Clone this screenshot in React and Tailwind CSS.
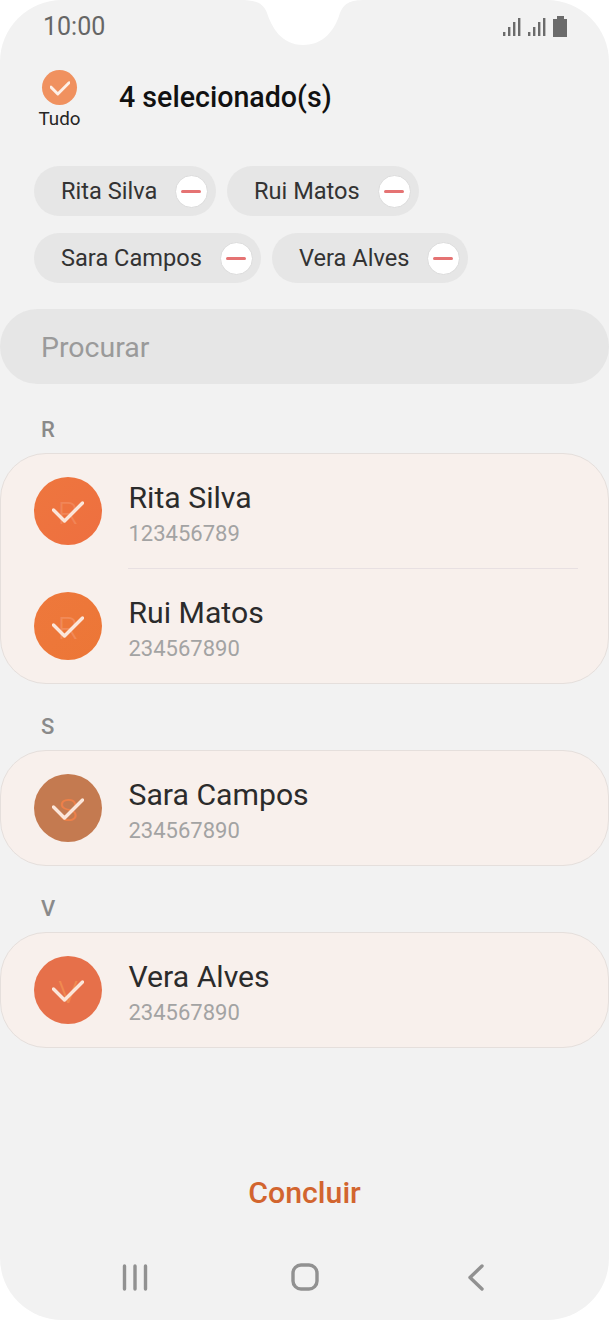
import React from "react";

const Check = ({ className, sw = 3.4 }) => (
  <svg viewBox="0 0 32 25" className={className} fill="none" stroke="currentColor" strokeWidth={sw} strokeLinecap="round" strokeLinejoin="round">
    <path d="M1.5 11 L12.5 22 L30.5 4" />
  </svg>
);

const Chip = ({ name, w }) => (
  <div className={`flex h-[50px] items-center justify-between rounded-full bg-[#e6e6e6] pr-[8.5px] pl-[27px] ${w}`}>
    <span className="pt-px text-[23.6px] leading-none text-[#333333]">{name}</span>
    <span className="flex h-[33px] w-[33px] items-center justify-center rounded-full border border-[#dcdcdc] bg-white">
      <span className="h-[3px] w-[20px] rounded-full bg-[#e57373]" />
    </span>
  </div>
);

const Avatar = ({ letter, bg, letterColor }) => (
  <div className={`relative flex h-[68px] w-[68px] shrink-0 items-center justify-center rounded-full ${bg}`}>
    <span className={`absolute top-[18px] left-0 w-full text-center text-[32px] leading-[36px] font-light ${letterColor}`}>{letter}</span>
    <Check className="relative h-[25px] w-[32px] text-[#fbe6da]" />
  </div>
);

const Row = ({ name, number, letter, bg, letterColor }) => (
  <div className="flex h-[114px] items-start pt-[23px] pl-[33px]">
    <Avatar letter={letter} bg={bg} letterColor={letterColor} />
    <div className="mt-[2px] ml-[26.5px] flex flex-col">
      <span className="text-[30.2px] leading-[37px] text-[#2b2b2b]">{name}</span>
      <span className="text-[22px] leading-[36px] text-[#a3a3a3]">{number}</span>
    </div>
  </div>
);

const Section = ({ label, mt, children }) => (
  <section className={mt}>
    <div className="h-[24px] pl-[41px] text-[22px] leading-[24px] font-medium text-[#8a8a8a]">{label}</div>
    <div className="mt-[11px] rounded-[46px] border border-[#e5dfdc] bg-[#f8f0ec]">{children}</div>
  </section>
);

const Signal = () => (
  <svg width="18" height="19" viewBox="0 0 18 19" fill="currentColor">
    <rect x="0" y="14" width="2.4" height="4" />
    <rect x="5" y="9" width="2.4" height="9" />
    <rect x="10" y="4" width="2.4" height="14" />
    <rect x="15" y="0" width="2.4" height="18" />
  </svg>
);

export default function App() {
  return (
    <div className="h-[1320px] w-[609px] overflow-hidden bg-white" style={{ fontFamily: "Roboto, sans-serif" }}>
      <div className="relative flex h-full flex-col rounded-[62px] bg-[#f2f2f2]">
        <svg className="absolute top-0 left-[240px] h-[48px] w-[125px]" viewBox="0 0 125 48" fill="#ffffff">
          <path d="M0 0 C14 0 23 2 27 13 C32 28 42 45 63 45 C84 45 94 30 99 16 C103 3 110 0 125 0 Z" />
        </svg>

        <div className="relative flex h-[52px] items-center justify-between pt-[1px] pr-[42px] pl-[43px]">
          <span className="text-[25px] leading-none text-[#666666]">10:00</span>
          <div className="flex items-end gap-[7px] text-[#6b6b6b]">
            <Signal />
            <Signal />
            <svg width="14" height="21" viewBox="0 0 14 21" fill="currentColor"><path d="M4 0 H11 V3 H14 V21 H0 V3 H4 Z" /></svg>
          </div>
        </div>

        <div className="flex h-[114px] items-start">
          <div className="mt-[18px] ml-[39px] flex w-[41px] flex-col items-center">
            <span className="flex h-[35px] w-[35px] items-center justify-center rounded-full bg-[#f0915f]">
              <Check className="h-[16px] w-[20px] text-[#fdf0e8]" sw={4.6} />
            </span>
            <span className="mt-[3px] text-[18.8px] leading-[22px] text-[#262626]">Tudo</span>
          </div>
          <h1 className="mt-[27px] ml-[39px] text-[28.6px] leading-[36px] font-medium text-[#111111]">4 selecionado(s)</h1>
        </div>

        <div className="flex flex-col gap-[17px] pl-[34px]">
          <div className="flex gap-[11px]">
            <Chip name="Rita Silva" w="w-[182px]" />
            <Chip name="Rui Matos" w="w-[192px]" />
          </div>
          <div className="flex gap-[11px]">
            <Chip name="Sara Campos" w="w-[227px]" />
            <Chip name="Vera Alves" w="w-[196px]" />
          </div>
        </div>

        <div className="mt-[26px] flex h-[75px] items-center rounded-full bg-[#e6e6e6] pt-[3px] pl-[41px] text-[28.5px] text-[#9a9a9a]">Procurar</div>

        <Section label="R" mt="mt-[34px]">
          <Row name="Rita Silva" number="123456789" letter="R" bg="bg-linear-to-br from-[#ee763e] to-[#ee6f40]" letterColor="text-[#f18557]" />
          <div className="mr-[30px] ml-[127px] h-px bg-[#e8e0e2]" />
          <Row name="Rui Matos" number="234567890" letter="R" bg="bg-linear-to-br from-[#ee783c] to-[#ec7636]" letterColor="text-[#f18a58]" />
        </Section>

        <Section label="S" mt="mt-[31px]">
          <Row name="Sara Campos" number="234567890" letter="S" bg="bg-[#c47a50]" letterColor="text-[#ee8048]" />
        </Section>

        <Section label="V" mt="mt-[31px]">
          <Row name="Vera Alves" number="234567890" letter="V" bg="bg-[#e6704a]" letterColor="text-[#f08a50]" />
        </Section>

        <div className="mt-[126px] text-center text-[30.3px] leading-[38px] font-medium text-[#d2652f]">Concluir</div>

        <div className="mt-[51px] flex items-center pl-[122px] text-[#919191]">
          <svg width="26" height="27" viewBox="0 0 26 27" fill="none" stroke="currentColor" strokeWidth="3.4" strokeLinecap="round">
            <path d="M2.5 2 V25 M13 2 V25 M23.5 2 V25" />
          </svg>
          <svg className="ml-[143px]" width="28" height="28" viewBox="0 0 28 28" fill="none" stroke="currentColor" strokeWidth="3.4">
            <rect x="2" y="2" width="24" height="24" rx="8" />
          </svg>
          <svg className="ml-[149px]" width="16" height="27" viewBox="0 0 16 27" fill="none" stroke="currentColor" strokeWidth="3.4" strokeLinecap="round" strokeLinejoin="round">
            <path d="M14 2 L2 13.5 L14 25" />
          </svg>
        </div>
      </div>
    </div>
  );
}
